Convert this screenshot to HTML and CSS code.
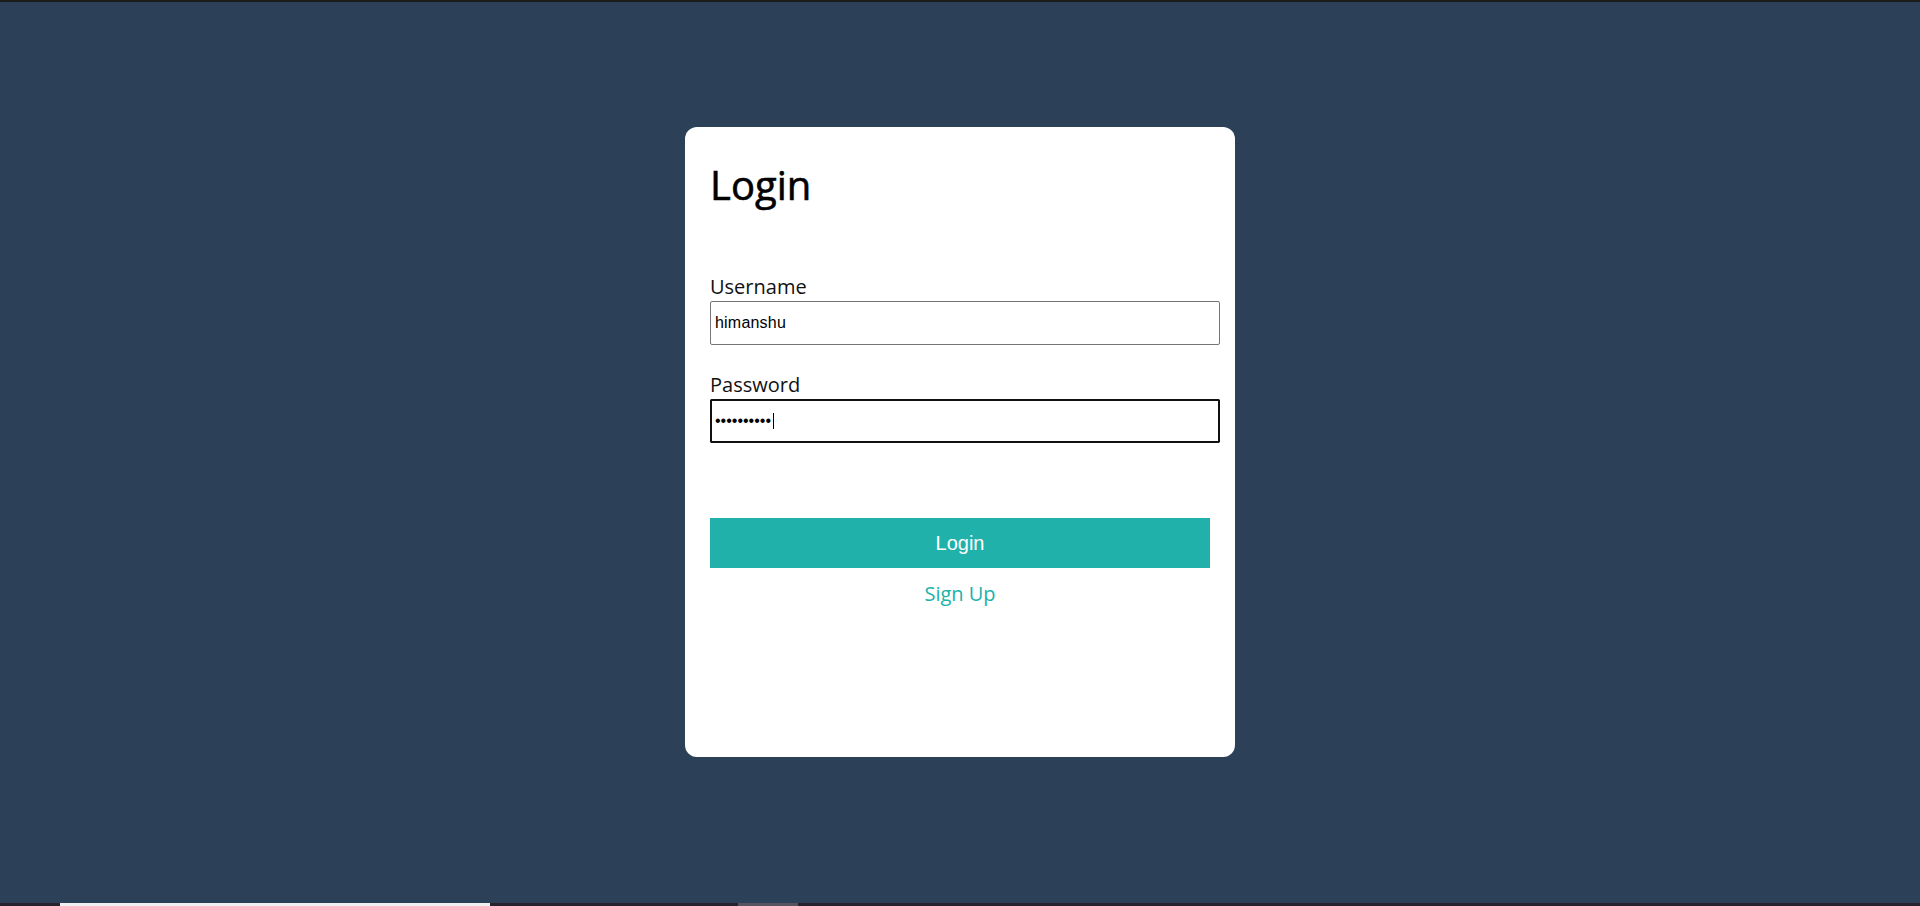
FILE: index.html
```html
<!DOCTYPE html>
<html lang="en">
<head>
<meta charset="utf-8">
<title>Login</title>
<link rel="stylesheet" href="styles.css">
</head>
<body>
<div class="topbar"></div>
<main class="stage">
  <section class="card">
    <h1 class="title">Login</h1>
    <form class="form">
      <div class="field">
        <label class="label" for="username">Username</label>
        <input class="input" id="username" type="text" value="himanshu">
      </div>
      <div class="field field-pass">
        <label class="label" for="password">Password</label>
        <div class="input-wrap">
          <input class="input input-focused" id="password" type="password" value="1234567890">
          <span class="caret"></span>
        </div>
      </div>
      <button class="btn" type="button">Login</button>
      <a class="signup" href="#">Sign Up</a>
    </form>
  </section>
</main>
<div class="taskbar">
  <div class="tb-gap1"></div>
  <div class="tb-white"></div>
  <div class="tb-gap2"></div>
  <div class="tb-gray"></div>
</div>
</body>
</html>
```

FILE: styles.css
```css
html, body {
  margin: 0;
  padding: 0;
}

body {
  height: 100vh;
  display: flex;
  flex-direction: column;
  background: #2c4157;
  font-family: "Open Sans", "Liberation Sans", sans-serif;
  overflow: hidden;
}

.topbar {
  height: 2px;
  background: #1b1b1b;
  flex: none;
}

.stage {
  flex: 1;
  display: flex;
  justify-content: center;
  align-items: flex-start;
  padding-top: 125px;
}

.card {
  width: 550px;
  height: 630px;
  box-sizing: border-box;
  padding: 30px 25px 0;
  background: #ffffff;
  border-radius: 12px;
}

.title {
  margin: 0;
  font-family: "Open Sans", sans-serif;
  font-size: 40px;
  font-weight: 400;
  -webkit-text-stroke: 0.6px #000000;
  color: #000000;
  line-height: normal;
}

.form {
  margin-top: 61px;
}

.field {
  margin-bottom: 26px;
}

.label {
  display: block;
  font-family: "Open Sans", sans-serif;
  font-size: 20px;
  color: #111111;
  line-height: normal;
  margin-bottom: 1px;
}

.input {
  display: block;
  width: 100%;
  margin: 0;
  padding: 12px 4px;
  border: 1px solid #767676;
  border-radius: 2px;
  font-family: "Liberation Sans", Arial, sans-serif;
  font-size: 16px;
  letter-spacing: 0.2px;
  line-height: normal;
  color: #000000;
  background: #ffffff;
}

.input-wrap {
  position: relative;
}

.input-focused {
  border-color: #101010;
  outline: 2px solid #101010;
  outline-offset: -2px;
  letter-spacing: 0;
}

.caret {
  position: absolute;
  left: 63px;
  top: 14px;
  width: 1px;
  height: 16px;
  background: #000000;
}

.field-pass {
  margin-bottom: 0;
}

.btn {
  display: block;
  width: 500px;
  height: 50px;
  margin-top: 75px;
  padding: 0;
  border: none;
  background: #20b2aa;
  color: #ffffff;
  font-family: "Liberation Sans", Arial, sans-serif;
  font-size: 20px;
  cursor: pointer;
}

.signup {
  display: block;
  margin-top: 12px;
  text-align: center;
  font-family: "Open Sans", sans-serif;
  font-size: 20px;
  color: #20b2aa;
  text-decoration: none;
  line-height: normal;
}

.taskbar {
  height: 3px;
  flex: none;
  display: flex;
  background: #26232e;
}

.tb-gap1 {
  width: 60px;
}

.tb-white {
  width: 430px;
  background: #f0f0f0;
}

.tb-gap2 {
  width: 248px;
}

.tb-gray {
  width: 60px;
  background: #56535e;
}
```
